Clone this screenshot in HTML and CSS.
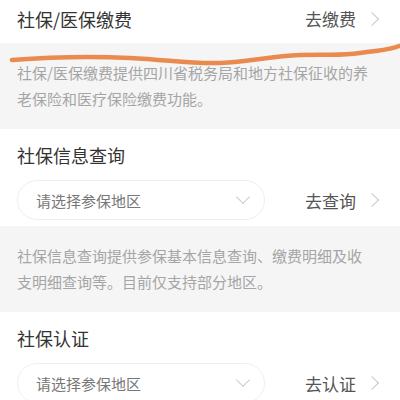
FILE: index.html
```html
<!DOCTYPE html>
<html lang="zh-CN">
<head>
  <meta charset="UTF-8">
  <meta name="viewport" content="width=device-width, initial-scale=1.0">
  <title>社保服务</title>
  <link rel="stylesheet" href="styles.css">
</head>
<body>
  <div class="page">
    <div class="card first">
      <div class="row">
        <div class="title">社保/医保缴费</div>
        <div class="go">去缴费 <span class="arrow"></span></div>
      </div>
    </div>
    <div class="desc">社保/医保缴费提供四川省税务局和地方社保征收的养老保险和医疗保险缴费功能。</div>

    <div class="card">
      <div class="title">社保信息查询</div>
      <div class="row pick-row">
        <div class="select">请选择参保地区 <span class="down"></span></div>
        <div class="go">去查询 <span class="arrow"></span></div>
      </div>
    </div>
    <div class="desc">社保信息查询提供参保基本信息查询、缴费明细及收支明细查询等。目前仅支持部分地区。</div>

    <div class="card">
      <div class="title">社保认证</div>
      <div class="row pick-row">
        <div class="select">请选择参保地区 <span class="down"></span></div>
        <div class="go">去认证 <span class="arrow"></span></div>
      </div>
    </div>

    <!-- 手画的橙色划线 -->
    <svg class="scribble" width="400" height="80" viewBox="0 0 400 80">
      <path d="M12 60 C 50 57, 90 56, 130 58 S 190 64, 220 63 S 270 56, 300 55 S 340 56, 360 53 S 390 50, 399 46" fill="none" stroke="#ea8a4f" stroke-width="4.5" stroke-linecap="round"/>
    </svg>
  </div>
</body>
</html>
```

FILE: styles.css
```css
body {
  margin: 0;
  font-family: "Noto Sans CJK SC", "Noto Sans", sans-serif;
  background: #f5f5f5;
  overflow: hidden;
}

.page {
  position: relative;
  width: 400px;
  height: 400px;
  overflow: hidden;
}

.card {
  background: #fff;
  padding: 14px 19px 6px 17px;
}

.card.first {
  padding-top: 6px;
  padding-bottom: 12px;
}

.row {
  display: flex;
  align-items: center;
  justify-content: space-between;
}

.title {
  font-size: 18px;
  line-height: 24px;
  color: #333;
}

.go {
  display: flex;
  align-items: center;
  gap: 11px;
  font-size: 17px;
  color: #555;
}

.arrow {
  width: 9px;
  height: 9px;
  border-top: 1.5px solid #c8c8c8;
  border-right: 1.5px solid #c8c8c8;
  transform: rotate(45deg);
  margin-right: 4px;
}

.pick-row {
  margin-top: 13px;
}

.select {
  width: 248px;
  height: 40px;
  box-sizing: border-box;
  border: 1px solid #efefef;
  border-radius: 20px;
  padding: 0 16px 0 18px;
  display: flex;
  align-items: center;
  justify-content: space-between;
  font-size: 15px;
  color: #777;
}

.down {
  width: 9px;
  height: 9px;
  border-right: 1.5px solid #ccc;
  border-bottom: 1.5px solid #ccc;
  transform: rotate(45deg);
  margin-top: -6px;
}

.desc {
  padding: 17px 30px 17px 17px;
  font-size: 15px;
  line-height: 26px;
  color: #a5a5a5;
}

.scribble {
  position: absolute;
  left: 0;
  top: 0;
}
```
